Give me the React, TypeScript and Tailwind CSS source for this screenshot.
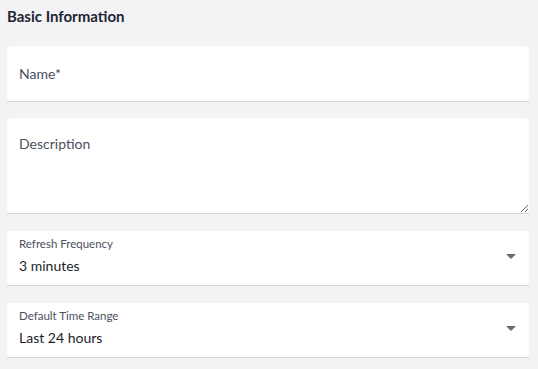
import React from 'react';

const font = { fontFamily: 'Lato, "Open Sans", sans-serif' };

const Caret: React.FC = () => (
  <svg width="10" height="5" viewBox="0 0 10 5" className="absolute right-[13px] top-[23px]">
    <path d="M0 0 L10 0 L5 5 Z" fill="#6b6b6f" />
  </svg>
);

const SelectField: React.FC<{ label: string; value: string }> = ({ label, value }) => (
  <div className="relative h-[55px] rounded-t-[4px] border-b border-[#d3d3d8] bg-white px-3 pt-[5px]">
    <div className="text-[11.5px] leading-[16px] text-[#4b5060]">{label}</div>
    <div className="mt-[6px] text-[14px] leading-[16px] text-[#1b1e27]">{value}</div>
    <Caret />
  </div>
);

export default function App() {
  return (
    <div className="min-h-[369px] w-[538px] bg-[#f3f3f5] px-[7px] pt-[6px]" style={font}>
      <h2 className="mb-[20px] text-[15px] font-bold leading-[20px] text-[#1f2433]">Basic Information</h2>
      <div className="flex w-[522px] flex-col">
        <div className="h-[56px] rounded-t-[4px] border-b border-[#d3d3d8] bg-white px-3">
          <input
            className="h-[55px] w-full bg-transparent text-[14px] text-[#1b1e27] outline-none placeholder:text-[#4b5060]"
            placeholder="Name*"
          />
        </div>
        <div className="mt-[16px] h-[96px] rounded-t-[4px] border-b border-[#d3d3d8] bg-white">
          <textarea
            className="block h-[95px] w-full resize-y bg-transparent px-3 pt-[17px] text-[14px] leading-[18px] text-[#1b1e27] outline-none placeholder:text-[#4b5060]"
            placeholder="Description"
          />
        </div>
        <div className="mt-[17px] flex flex-col gap-[17px]">
          <SelectField label="Refresh Frequency" value="3 minutes" />
          <SelectField label="Default Time Range" value="Last 24 hours" />
        </div>
      </div>
    </div>
  );
}
